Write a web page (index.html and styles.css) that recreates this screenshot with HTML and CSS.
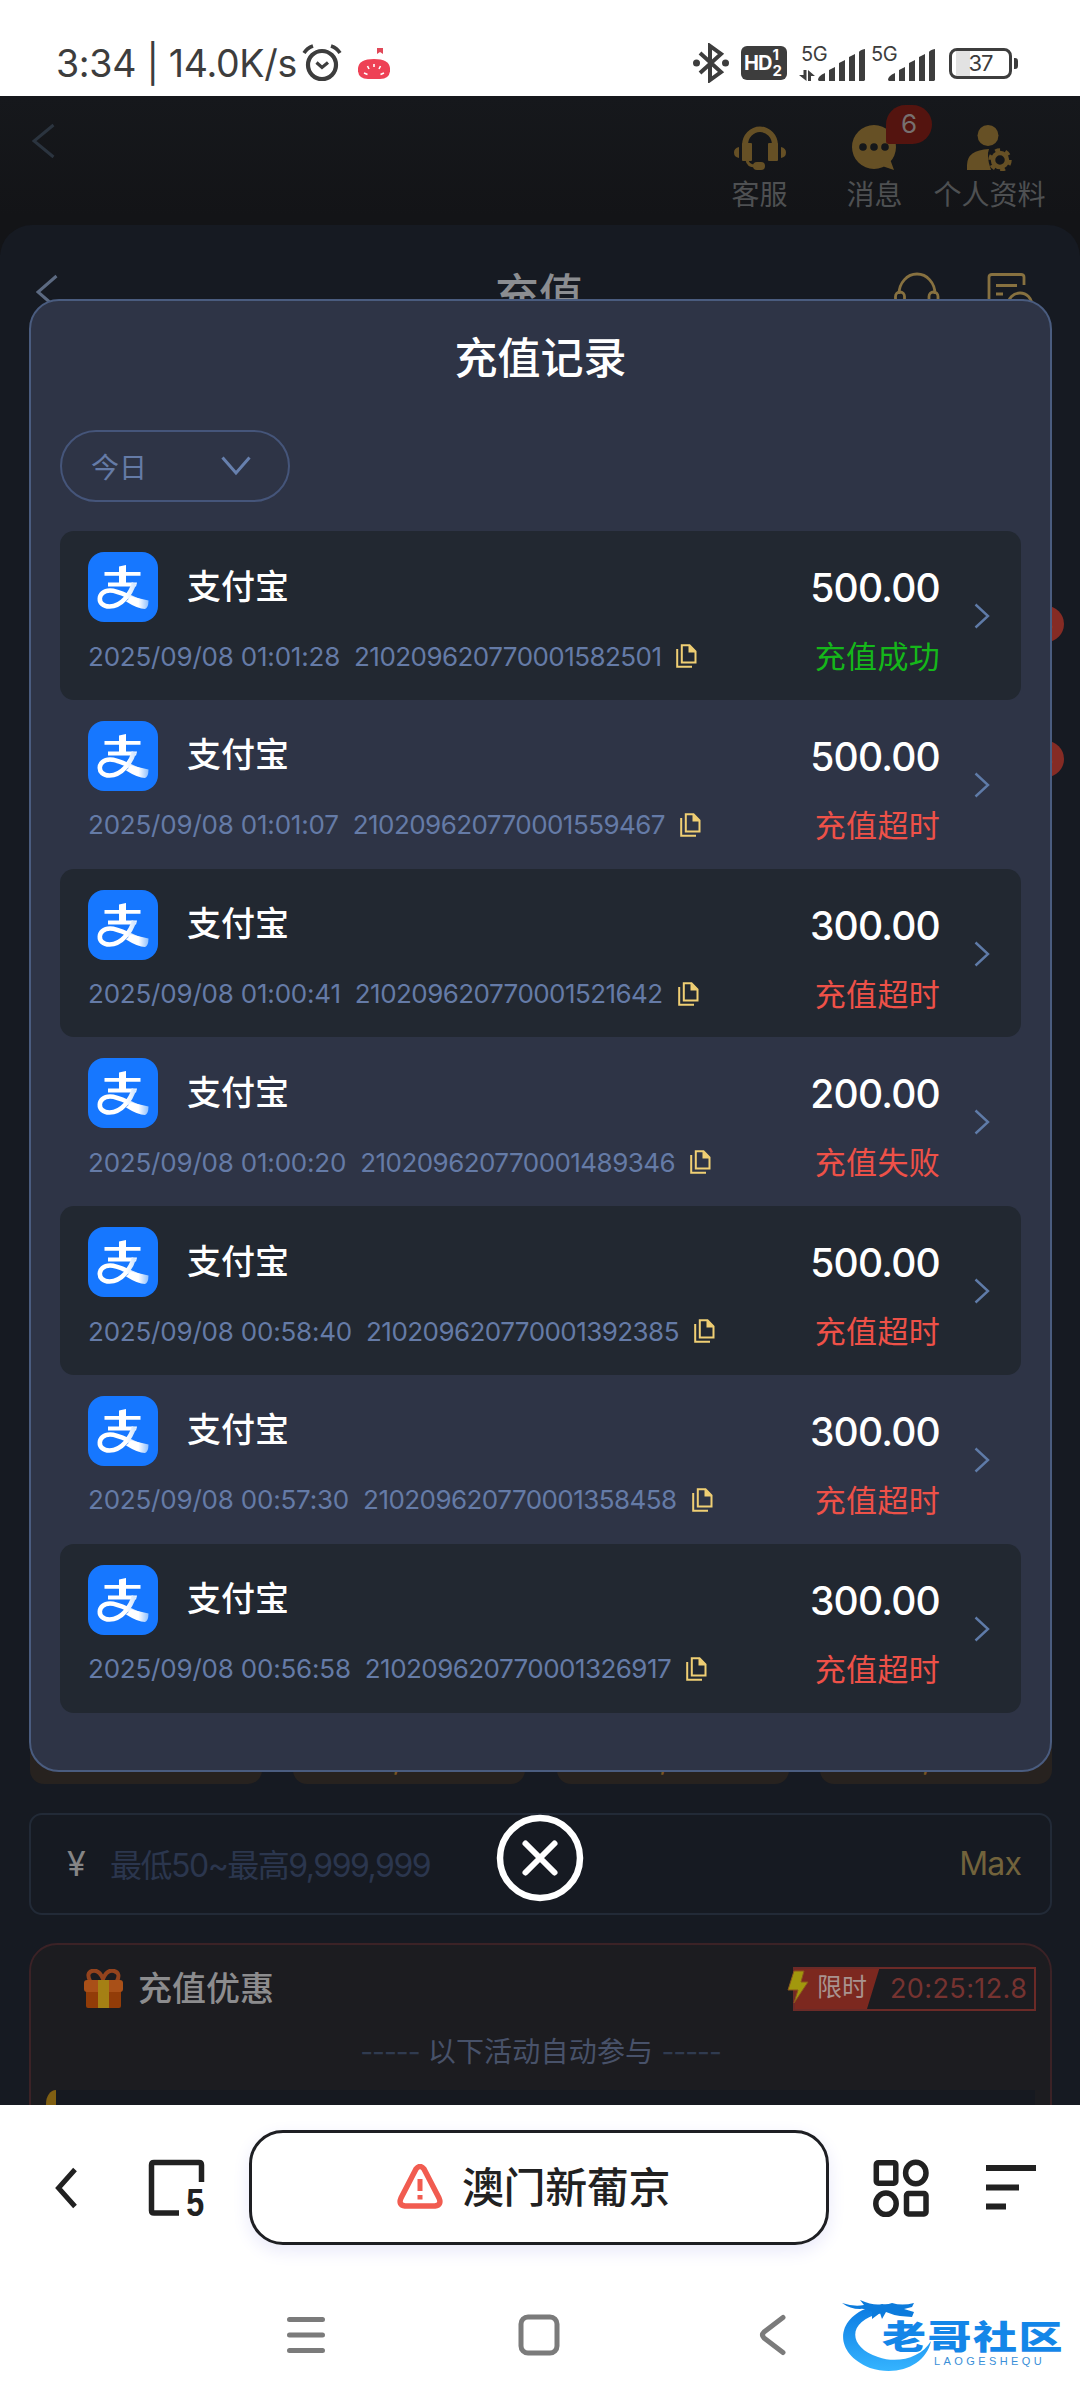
FILE: index.html
```html
<!DOCTYPE html>
<html lang="zh-CN">
<head>
<meta charset="utf-8">
<title>充值记录</title>
<link rel="stylesheet" href="styles.css">
</head>
<body>
<svg class="defs" width="0" height="0">
  <defs>
    <linearGradient id="tail" x1="0" y1="0" x2="1" y2="0"><stop offset=".55" stop-color="#fff"/><stop offset="1" stop-color="#8fc0ff"/></linearGradient>
    <linearGradient id="brand" x1="0" y1="0" x2="0" y2="1"><stop offset="0" stop-color="#0c7be2"/><stop offset="1" stop-color="#35b4ff"/></linearGradient>
  </defs>
  <symbol id="alipay" viewBox="0 0 70 70">
    <path d="M31 14.5L38 13V33H31Z" fill="#fff"/>
    <path d="M16.5 20H52.500V23.800H16.500Z" fill="#fff"/>
    <path d="M20 30.500H49L48 34.500H20Z" fill="#fff"/>
    <path d="M46 31C43 41 34 54.500 21.500 54.500C8 54.500 9 38.500 22 38.500C32 38.500 41 46 59.500 52" fill="none" stroke="url(#tail)" stroke-width="4.600"/>
    <path d="M43 44.500L60.500 48.500Q60.500 56 57 57Q50 57 38 49.500Z" fill="url(#tail)"/>
  </symbol>
  <symbol id="copy" viewBox="0 0 21 24">
    <path d="M1.200 5V22.800H16" fill="none" stroke="#f0cf74" stroke-width="2"/>
    <path d="M5.800 1.200H13.500L19.500 7.500V18.500H5.800Z" fill="none" stroke="#f0cf74" stroke-width="2"/>
    <path d="M12.500 1V8.500H20Z" fill="#f0cf74"/>
  </symbol>
  <symbol id="next" viewBox="0 0 16 26"><path d="M1.500 1.500L14 13L1.500 24.500" fill="none" stroke="#5f7ba8" stroke-width="2.400"/></symbol>
</svg>

<header class="status">
  <span class="clock">3:34 | 14.0K/s</span>
  <svg class="alarm" width="40" height="38" viewBox="0 0 40 38" fill="none" stroke="#3d3d3d"><circle cx="20" cy="21" r="14" stroke-width="4.200"/><path d="M14.500 18.500L20 23.500L26 18.500" stroke-width="3.200"/><path d="M2 9Q5 4 11 2M38 9Q35 4 29 2" stroke-width="3.600"/></svg>
  <svg class="tomato" width="32" height="34" viewBox="0 0 32 34"><path d="M19 1H25V7L22 5L19 7Z" fill="#e04858"/><path d="M0 21Q1 12 16 12T32 21Q33 32 22 32H10Q-1 32 0 21Z" fill="#ee4155"/><path d="M16 17V20M9.500 19L11 22M22.500 19L21 22M6 26L9.500 27.500M26 26L22.500 27.500" stroke="#fff" stroke-width="1.600"/></svg>
  <div class="signals">
    <svg class="bt" width="36" height="40" viewBox="0 0 36 40" fill="none" stroke="#3d3d3d" stroke-width="4"><path d="M7 10L28 29L17 37V3L28 11L7 30"/><circle cx="3.500" cy="20" r="3.500" fill="#3d3d3d" stroke="none"/><circle cx="32.500" cy="20" r="3.500" fill="#3d3d3d" stroke="none"/></svg>
    <div class="hd"><b>HD</b><span><i>1</i><i>2</i></span></div>
    <div class="cell"><span>5G</span>
      <svg width="66" height="34" viewBox="0 0 66 34" fill="#3d3d3d"><path d="M4.500 21H7.500V32L0 26H4.500ZM9 21L16 27H12V32H9Z"/><path d="M19 31Q19 27 26 24V32H20ZM30 21L36 18V32H30ZM40 14L46 11V32H40ZM50 8L56 5V32H50ZM60 3Q61 1 66 0V31L65 32H60Z"/></svg></div>
    <div class="cell two"><span>5G</span>
      <svg width="66" height="34" viewBox="0 0 66 34" fill="#3d3d3d"><path d="M19 31Q19 27 26 24V32H20ZM30 21L36 18V32H30ZM40 14L46 11V32H40ZM50 8L56 5V32H50ZM60 3Q61 1 66 0V31L65 32H60Z"/></svg></div>
    <div class="battery"><span>37</span></div>
  </div>
</header>

<main class="page">
  <div class="topbar">
    <svg class="tb-back" width="24" height="36" viewBox="0 0 24 36" fill="none" stroke="#2b343f" stroke-width="3"><path d="M21.500 2L2 18L21.500 34"/></svg>
    <div class="tb-item"><svg width="52" height="46" viewBox="0 0 52 46" fill="#665025"><path d="M8 20A17.500 18 0 0 1 44 20H38A12 13 0 0 0 14 20Z"/><rect x="8" y="18" width="10" height="18" rx="1"/><rect x="34" y="18" width="10" height="18" rx="1"/><path d="M5 22V33Q0 32 0 27.500T5 22ZM47 22V33Q52 32 52 27.500T47 22Z"/><path d="M13 35Q14 41 21 41" fill="none" stroke="#665025" stroke-width="3"/><rect x="19" y="37" width="12" height="8" rx="4"/></svg><span>客服</span></div>
    <div class="tb-item msg"><svg width="46" height="46" viewBox="0 0 46 46"><path d="M22 0A22 22 0 1 1 0 22A22 22 0 0 1 22 0ZM38 34L42 45L30 41Z" fill="#665025"/><circle cx="11" cy="22" r="3.800" fill="#15171a"/><circle cx="22" cy="22" r="3.800" fill="#15171a"/><circle cx="33" cy="22" r="3.800" fill="#15171a"/></svg><em>6</em><span>消息</span></div>
    <div class="tb-item"><svg width="46" height="46" viewBox="0 0 46 46"><circle cx="21" cy="10.500" r="10.500" fill="#665025"/><path d="M0 45V40Q0 25 22 24Q19 31 24 45Z" fill="#665025"/><circle cx="33" cy="35" r="7" fill="none" stroke="#665025" stroke-width="4.500"/><circle cx="33" cy="35" r="10" fill="none" stroke="#665025" stroke-width="3.500" stroke-dasharray="5 5.470"/></svg><span class="wide">个人资料</span></div>
  </div>
  <section class="sheet">
    <div class="sheet-head">
      <svg width="24" height="36" viewBox="0 0 24 36" fill="none" stroke="#5c6a82" stroke-width="3"><path d="M20.500 2L2 18L20.500 34"/></svg>
      <h2>充值</h2>
      <div class="sheet-tools">
        <svg width="46" height="46" viewBox="0 0 46 46" fill="none" stroke="#877140" stroke-width="2.800"><path d="M5 22A18 20 0 0 1 41 22"/><rect x="1.500" y="20" width="9" height="16" rx="4.500"/><rect x="35" y="20" width="9" height="16" rx="4.500"/></svg>
        <svg width="46" height="46" viewBox="0 0 46 46" fill="none" stroke="#877140" stroke-width="2.800"><path d="M37 13V5Q37 2.500 34 2.500H5Q2 2.500 2 5V44M9 13.500H30M9 22H16"/><circle cx="33" cy="33" r="12"/><path d="M29 28L33 32L37 28"/></svg>
      </div>
    </div>
    <div class="methods"><i>3</i><i>3</i></div>
    <div class="amounts"><span>500</span><span>1,000</span><span>2,000</span><span>5,000</span></div>
    <div class="field"><span class="yen">¥</span><span class="hint">最低50~最高9,999,999</span><span class="max">Max</span></div>
    <div class="promo">
      <div class="promo-head">
        <svg width="39" height="40" viewBox="0 0 39 40"><path d="M6 12Q2 4 8 2Q15 0 19 10Q23 0 30 2Q37 4 33 12" fill="none" stroke="#94431d" stroke-width="4"/><rect x="2" y="20" width="35" height="19" rx="2" fill="#923c08"/><rect x="0" y="11" width="39" height="12" rx="3" fill="#a95018"/><rect x="14" y="11" width="11" height="28" fill="#a58014"/></svg>
        <h3>充值优惠</h3>
        <div class="timer"><svg class="bolt" width="22" height="34" viewBox="0 0 22 34"><path d="M7 1H17L14 12H21L7 33L11 20H1Z" fill="#a2980d" stroke="#8a571d"/></svg><b>限时</b><span>20:25:12.8</span></div>
      </div>
      <p class="promo-note"><s>-----</s> 以下活动自动参与 <s>-----</s></p>
      <div class="promo-body"><i></i></div>
    </div>
  </section>

  <div class="modal">
    <h1>充值记录</h1>
    <div class="select"><span>今日</span><svg width="30" height="20" viewBox="0 0 30 20" fill="none" stroke="#6780ae" stroke-width="3"><path d="M1.500 1.500L15 17L28.500 1.500"/></svg></div>
    <div class="list">
      <div class="row"><div class="left"><div class="pay"><svg class="logo"><use href="#alipay"/></svg><span>支付宝</span></div><div class="meta"><span class="date">2025/09/08 01:01:28</span><span class="id">210209620770001582501</span><svg class="copy"><use href="#copy"/></svg></div></div><div class="right"><span class="amount">500.00</span><span class="state ok">充值成功</span></div><svg class="next"><use href="#next"/></svg></div>
      <div class="row"><div class="left"><div class="pay"><svg class="logo"><use href="#alipay"/></svg><span>支付宝</span></div><div class="meta"><span class="date">2025/09/08 01:01:07</span><span class="id">210209620770001559467</span><svg class="copy"><use href="#copy"/></svg></div></div><div class="right"><span class="amount">500.00</span><span class="state">充值超时</span></div><svg class="next"><use href="#next"/></svg></div>
      <div class="row"><div class="left"><div class="pay"><svg class="logo"><use href="#alipay"/></svg><span>支付宝</span></div><div class="meta"><span class="date">2025/09/08 01:00:41</span><span class="id">210209620770001521642</span><svg class="copy"><use href="#copy"/></svg></div></div><div class="right"><span class="amount">300.00</span><span class="state">充值超时</span></div><svg class="next"><use href="#next"/></svg></div>
      <div class="row"><div class="left"><div class="pay"><svg class="logo"><use href="#alipay"/></svg><span>支付宝</span></div><div class="meta"><span class="date">2025/09/08 01:00:20</span><span class="id">210209620770001489346</span><svg class="copy"><use href="#copy"/></svg></div></div><div class="right"><span class="amount">200.00</span><span class="state">充值失败</span></div><svg class="next"><use href="#next"/></svg></div>
      <div class="row"><div class="left"><div class="pay"><svg class="logo"><use href="#alipay"/></svg><span>支付宝</span></div><div class="meta"><span class="date">2025/09/08 00:58:40</span><span class="id">210209620770001392385</span><svg class="copy"><use href="#copy"/></svg></div></div><div class="right"><span class="amount">500.00</span><span class="state">充值超时</span></div><svg class="next"><use href="#next"/></svg></div>
      <div class="row"><div class="left"><div class="pay"><svg class="logo"><use href="#alipay"/></svg><span>支付宝</span></div><div class="meta"><span class="date">2025/09/08 00:57:30</span><span class="id">210209620770001358458</span><svg class="copy"><use href="#copy"/></svg></div></div><div class="right"><span class="amount">300.00</span><span class="state">充值超时</span></div><svg class="next"><use href="#next"/></svg></div>
      <div class="row"><div class="left"><div class="pay"><svg class="logo"><use href="#alipay"/></svg><span>支付宝</span></div><div class="meta"><span class="date">2025/09/08 00:56:58</span><span class="id">210209620770001326917</span><svg class="copy"><use href="#copy"/></svg></div></div><div class="right"><span class="amount">300.00</span><span class="state">充值超时</span></div><svg class="next"><use href="#next"/></svg></div>
    </div>
  </div>
  <svg class="close" width="88" height="88" viewBox="0 0 88 88" fill="none" stroke="#fff"><circle cx="44" cy="44" r="40" stroke-width="6.500"/><path d="M29.500 29.500L58.500 58.500M58.500 29.500L29.500 58.500" stroke-width="6" stroke-linecap="round"/></svg>
</main>

<nav class="browser">
  <svg class="b-back" width="24" height="42" viewBox="0 0 24 42" fill="none" stroke="#212121" stroke-width="5"><path d="M20 2.500L3.500 21L20 39.500"/></svg>
  <div class="tabs"><svg width="58" height="58" viewBox="0 0 58 58" fill="none" stroke="#212121" stroke-width="5.500"><path d="M53.500 23V6Q53.500 3.500 51 3.500H6Q3.500 3.500 3.500 6V51.500Q3.500 54 6 54H31"/></svg><span>5</span></div>
  <div class="address"><svg width="46" height="46" viewBox="0 0 46 46" fill="none" stroke="#f15c50"><path d="M19 5Q23 0 27 5L42 34Q45 41 38 42H8Q1 41 4 34Z" stroke-width="5.500" stroke-linejoin="round"/><path d="M23 15V27M23 31V35.500" stroke-width="5"/></svg><span>澳门新葡京</span></div>
  <svg class="grid" width="56" height="58" viewBox="0 0 56 58" fill="none" stroke="#212121" stroke-width="5.500"><rect x="3.300" y="3.700" width="19.500" height="20.500" rx="2"/><rect x="33.500" y="34.500" width="19.500" height="20.500" rx="2"/><ellipse cx="42.800" cy="14" rx="10.200" ry="10.800"/><ellipse cx="13" cy="44.800" rx="10.200" ry="10.800"/></svg>
  <svg class="lines" width="50" height="46" viewBox="0 0 50 46" fill="#212121"><path d="M0 0H50V6H0ZM0 19.500H33V25.500H0ZM0 38.500H20V44.500H0Z"/></svg>
</nav>
<footer class="system">
  <svg class="s-menu" width="40" height="38" viewBox="0 0 40 38" stroke="#7b7b7b" stroke-width="5" stroke-linecap="round"><path d="M3.500 3.500H36.500M3.500 19H36.500M3.500 34.500H36.500"/></svg>
  <svg class="s-home" width="42" height="42" viewBox="0 0 42 42"><rect x="3" y="3" width="36" height="36" rx="7" fill="none" stroke="#7b7b7b" stroke-width="5"/></svg>
  <svg class="s-back" width="28" height="42" viewBox="0 0 28 42" fill="none" stroke="#7b7b7b" stroke-width="5" stroke-linecap="round" stroke-linejoin="round"><path d="M24 3.500L5 18Q2 21 5 24L24 38.500"/></svg>
  <div class="brand">
    <svg width="96" height="76" viewBox="0 0 96 76"><path d="M29 10C-6 20 -10 56 28 71C56 80 84 68 89 44C79 61 55 67 36 60C6 50 4 24 40 16Z" fill="url(#brand)"/><path d="M0 6Q12 10 22 8L18 3Q32 9 40 7Q45 8 50 6Q60 9 72 6L70 10L62 12L72 15L70 20L58 19Q51 18 44 15L40 22L38 16L30 22L30 15Q22 11 18 12Q8 12 0 6Z" fill="#0c7bdc"/></svg>
    <b>老哥社区</b><small>LAOGESHEQU</small>
  </div>
</footer>
</body>
</html>
```
FILE: styles.css
```css
* { box-sizing: border-box; margin: 0; padding: 0; }
body { width: 1080px; height: 2400px; overflow: hidden; background: #fff; font-family: Inter, "Noto Sans CJK SC", sans-serif; white-space: nowrap; }
svg { display: block; flex: none; }
i, em { font-style: normal; }
.defs { position: absolute; }

.status { height: 96px; display: flex; align-items: flex-start; padding-left: 56px; color: #3d3d3d; }
.clock { width: 246px; font-size: 37.5px; line-height: 44px; letter-spacing: -0.3px; margin-top: 42px; }
.alarm { margin-top: 44px; }
.tomato { margin: 47px 0 0 16px; }
.signals { display: flex; align-items: flex-start; margin-left: auto; padding-right: 68px; }
.bt { margin-top: 43px; }
.hd { width: 46px; height: 34px; margin: 46px 0 0 12px; border-radius: 6px; background: #3d3d3d; color: #fff; display: flex; align-items: center; padding-left: 3px; }
.hd b { font-size: 20px; letter-spacing: -1px; }
.hd span { font-size: 15px; line-height: 16px; font-weight: 700; margin-left: 1px; }
.hd i { display: block; }
.cell { position: relative; width: 66px; margin: 49px 0 0 12px; }
.cell.two { margin-left: 4px; }
.cell span { position: absolute; left: 2px; top: -7px; font-size: 20px; line-height: 24px; letter-spacing: -0.5px; }
.battery { position: relative; width: 63px; height: 31px; margin: 48px 0 0 14px; border: 3px solid #3d3d3d; border-radius: 8px; background: linear-gradient(90deg, #fff 4px, #e2e2e2 4px 18px, #fff 18px); text-align: center; font-size: 22px; line-height: 25px; letter-spacing: -1px; }
.battery::after { content: ""; position: absolute; left: 62px; top: 7px; width: 4px; height: 11px; border-radius: 0 3px 3px 0; background: #3d3d3d; }

.page { position: relative; height: 2009px; overflow: hidden; background: linear-gradient(#16181c, #131417 120px); }
.topbar { height: 129px; display: flex; padding: 29px 33px 0 32px; }
.tb-back { margin: -2px auto 0 0; }
.tb-item { position: relative; width: 115px; display: flex; flex-direction: column; align-items: center; }
.tb-item span { margin-top: 6px; font-size: 28px; line-height: 36px; color: #4e5052; }
.tb-item em { position: absolute; left: 69px; top: -20px; width: 46px; height: 39px; border-radius: 20px 20px 20px 3px; background: #54140f; color: #77706f; font-size: 26px; line-height: 38px; text-align: center; }

.sheet { height: 1880px; border-radius: 32px 32px 0 0; background: #161a22; }
.sheet-head { height: 100px; display: flex; align-items: flex-start; padding: 47px 47px 0 36px; justify-content: space-between; }
.sheet-head > svg { margin-top: 2px; }
.sheet-head h2 { font-size: 44px; line-height: 44px; font-weight: 500; color: #8b8d91; margin: 1px 0 0 124px; }
.sheet-tools { display: flex; gap: 47px; }
.methods { height: 1359px; padding: 281px 16px 0 0; display: flex; flex-direction: column; align-items: flex-end; gap: 99px; }
.methods i { width: 36px; height: 36px; border-radius: 18px; background: #852b24; color: #aaa; font-size: 24px; line-height: 36px; text-align: center; }
.amounts { height: 100px; display: grid; grid-template: 100px / repeat(4, 232px); justify-content: space-between; padding: 0 28px 0 30px; }
.amounts span { border-radius: 14px; background: #27221f; color: #795524; font-size: 32px; line-height: 148px; text-align: center; overflow: hidden; padding-left: 22px; }
.field { height: 102px; margin: 29px 28px 0 29px; border: 2px solid #222a37; border-radius: 13px; display: flex; align-items: center; padding: 0 29px 2px 36px; font-size: 32px; }
.yen { color: #858586; width: 43px; font-size: 34px; }
.hint { color: #2b364e; letter-spacing: -1.5px; }
.max { color: #72633c; margin-left: auto; letter-spacing: -0.9px; }
.promo { height: 200px; margin: 28px 28px 0 29px; border: 2px solid #3b2226; border-radius: 28px; background: #1c1c20; overflow: hidden; }
.promo-head { display: flex; align-items: center; padding: 22px 14px 0 53px; }
.promo h3 { font-size: 34px; line-height: 44px; font-weight: 500; color: #8c8c8e; margin-left: 15px; }
.timer { position: relative; margin-left: auto; width: 243px; height: 44px; border: 2px solid #6c2a27; display: flex; align-items: center; padding-bottom: 1px; background: linear-gradient(107deg, #7c281f 80px, transparent 81px); }
.bolt { position: absolute; left: -8px; top: 1px; }
.timer b { width: 75px; padding-left: 22px; font-size: 25px; line-height: 36px; margin-top: -3px; font-weight: 400; color: #a9938f; }
.timer span { font-size: 27px; color: #763330; margin-left: 20px; letter-spacing: 0.4px; }
.promo-note { font-size: 28px; line-height: 40px; margin-top: 21px; text-align: center; color: #48526a; letter-spacing: 0.2px; }
.promo-note s { text-decoration: none; color: #303b50; letter-spacing: -1px; }
.promo-body { height: 60px; margin: 18px 15px 0 25px; background: #161920; }
.promo-body i { display: block; width: 10px; height: 24px; margin-left: -10px; border-radius: 10px 0 0 0 / 14px 0 0 0; background: #805f12; }

.modal { position: absolute; left: 29px; top: 203px; width: 1023px; height: 1473px; border: 2px solid #4a5c7f; border-radius: 30px; background: #2e3446; padding: 0 29px; }
.modal h1 { font-size: 43px; line-height: 60px; font-weight: 500; color: #fff; text-align: center; margin-top: 27px; }
.select { width: 230px; height: 72px; margin-top: 42px; border: 2px solid #45557a; border-radius: 36px; display: flex; align-items: center; justify-content: space-between; padding: 0 37px 1px 29px; font-size: 28px; color: #657ba7; }
.list { margin-top: 29px; display: grid; grid-auto-rows: 168.8px; }
.row { position: relative; display: flex; border-radius: 14px; padding: 21px 31px 0 28px; }
.row:nth-child(odd) { background: #222831; }
.left { flex: 1; }
.pay { display: flex; align-items: center; height: 70px; gap: 29px; font-size: 34px; line-height: 50px; font-weight: 500; color: #fff; }
.pay span { margin-bottom: 1px; }
.logo { width: 70px; height: 70px; border-radius: 16px; background: #1677ff; }
.meta { display: flex; align-items: center; height: 36px; margin-top: 16px; font-size: 26px; color: #657ba7; }
.date { margin-right: 14px; letter-spacing: -0.2px; }
.id { letter-spacing: -0.55px; }
.copy { width: 21px; height: 24px; margin-left: 15px; }
.right { display: flex; flex-direction: column; align-items: flex-end; }
.amount { font-size: 39px; line-height: 50px; font-weight: 500; color: #fff; margin-top: 11px; letter-spacing: -0.8px; }
.state { font-size: 31px; line-height: 44px; margin-top: 22px; color: #ee5148; letter-spacing: 0.3px; }
.state.ok { color: #15b71a; }
.next { width: 16px; height: 26px; margin: 51px 0 0 34px; }
.close { position: absolute; left: 496px; top: 1718px; }

.browser { height: 160px; display: flex; align-items: center; padding: 5px 44px 0 55px; background: #fff; }
.tabs { position: relative; margin-left: 69px; }
.tabs span { position: absolute; right: 2px; bottom: -2px; font: 700 38px/32px "Liberation Sans", sans-serif; color: #212121; transform: scaleX(.85); transform-origin: right; }
.address { width: 580px; height: 115px; margin-left: 43px; border: 3px solid #1e1f23; border-radius: 34px; display: flex; align-items: center; justify-content: center; gap: 19px; padding: 0 11px 2px 0; box-shadow: 0 6px 18px #e9e9fa; font-size: 42px; font-weight: 500; color: #212121; }
.address span { letter-spacing: -0.4px; margin-bottom: 4px; }
.grid { margin-left: 44px; }
.lines { margin-left: auto; }
.system { height: 135px; display: flex; align-items: center; padding: 5px 0 0 286px; }
.s-home { margin-left: 192px; }
.s-back { margin-left: 199px; }
.brand { position: relative; margin-left: 55px; width: 222px; height: 76px; }
.brand b { position: absolute; left: 40px; top: 22px; font-size: 44px; line-height: 36px; font-weight: 900; letter-spacing: 1.500px; color: #1486e8; transform: scaleY(.76); }
.brand small { position: absolute; left: 92px; top: 58px; font: 11px/12px "Liberation Sans", sans-serif; letter-spacing: 3.400px; color: #3a8fd8; }
```
